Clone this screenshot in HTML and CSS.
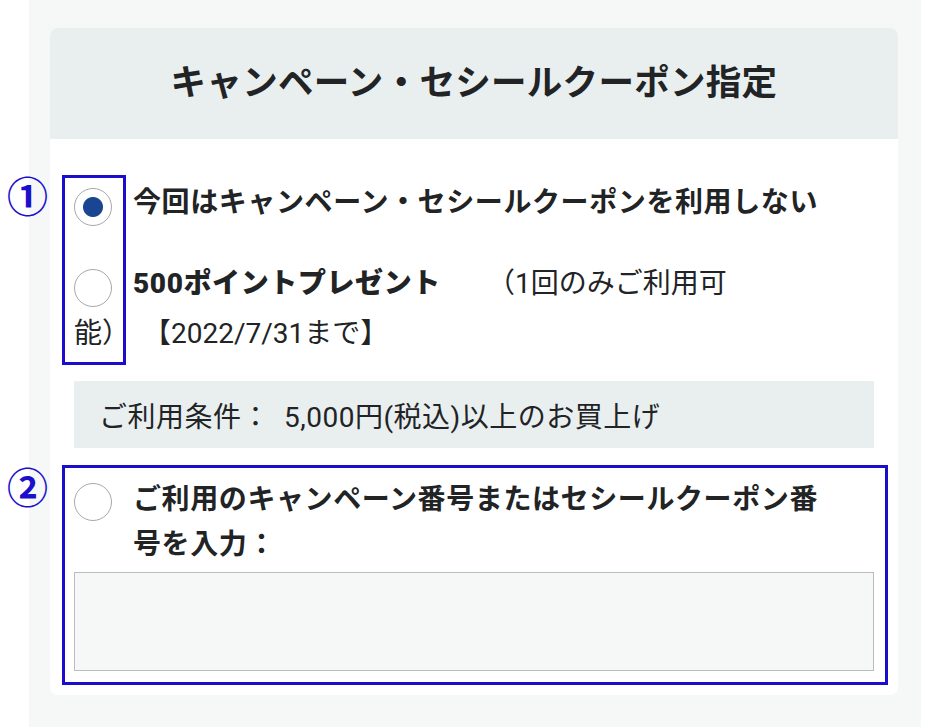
FILE: index.html
```html
<!DOCTYPE html>
<html lang="ja">
<head>
    <meta charset="UTF-8">
    <title>キャンペーン・セシールクーポン指定</title>
    <link rel="stylesheet" href="styles.css">
</head>
<body>

<div class="page">
    <div class="card">
        <h1 class="card-title">キャンペーン・セシールクーポン指定</h1>

        <div class="card-body">
            <span class="mark mark-one">①</span>
            <span class="frame frame-one"></span>
            <span class="mark mark-two">②</span>
            <span class="frame frame-two"></span>

            <label class="choice">
                <input type="radio" name="coupon" class="radio" checked>
                <span class="choice-text">今回はキャンペーン・セシールクーポンを利用しない</span>
            </label>

            <label class="choice choice-flow">
                <input type="radio" name="coupon" class="radio">
                <b>500ポイントプレゼント</b><span class="note">（1回のみご利用可<br>能）</span><span class="limit">【2022/7/31まで】</span>
            </label>

            <div class="condition">ご利用条件：<span class="condition-value">5,000円(税込)以上のお買上げ</span></div>

            <label class="choice choice-code">
                <input type="radio" name="coupon" class="radio">
                <span class="choice-text">ご利用のキャンペーン番号またはセシールクーポン番号を入力：</span>
            </label>
            <textarea class="code-input"></textarea>
        </div>
    </div>
</div>

</body>
</html>
```

FILE: styles.css
```css
body {
    margin: 0;
    padding: 0;
    background-color: #ffffff;
    color: #212325;
    font-family: Roboto, "Noto Sans CJK JP", sans-serif;
}

.page {
    margin-left: 29px;
    width: 892px;
    min-height: 727px;
    box-sizing: border-box;
    padding: 28px 23px 32px 21px;
    background-color: #f6f8f8;
}

.card {
    background: #fff;
    border-radius: 8px;
}

.card-title {
    margin: 0;
    height: 111px;
    line-height: 111px;
    text-align: center;
    font-size: 35.5px;
    letter-spacing: 0.3px;
    font-weight: bold;
    background-color: #e9eeef;
    border-radius: 8px 8px 0 0;
}

.card-body {
    position: relative;
    padding: 49px 24px 24px;
}

/* annotation marks drawn over the form */
.mark {
    position: absolute;
    left: -43px;
    font-size: 41px;
    line-height: 40px;
    font-weight: bold;
    color: #1c0fcb;
    font-family: "Noto Sans CJK JP", sans-serif;
}

.mark-one {
    top: 35px;
}

.mark-two {
    top: 326px;
}

.frame {
    position: absolute;
    left: 12px;
    border: 3px solid #1a0dcc;
    box-sizing: border-box;
}

.frame-one {
    top: 36px;
    width: 64px;
    height: 190px;
}

.frame-two {
    top: 326px;
    width: 826px;
    height: 220px;
}

.radio {
    appearance: none;
    -webkit-appearance: none;
    width: 38px;
    height: 38px;
    margin: 0;
    border: 1px solid #a8a8a8;
    border-radius: 50%;
    background: #fff;
    flex-shrink: 0;
}

.radio:checked {
    background: radial-gradient(circle, #1a4592 0 9.5px, #fff 10.5px);
}

.choice {
    display: flex;
    align-items: flex-start;
    gap: 21px;
    font-size: 28px;
    letter-spacing: 0.6px;
    font-weight: bold;
}

.choice-text {
    line-height: 30px;
}

.choice-flow {
    display: block;
    margin-top: 33px;
    line-height: 50px;
}

.choice-flow .radio {
    float: left;
    margin: 10px 21px 0 0;
}

.note {
    font-weight: normal;
    letter-spacing: 0;
    margin-left: 46px;
}

.limit {
    font-weight: normal;
    letter-spacing: 0;
    margin-left: 27px;
}

.condition {
    margin-top: 22px;
    height: 67px;
    display: flex;
    align-items: center;
    padding-left: 25px;
    font-size: 28px;
    letter-spacing: 0.5px;
    background-color: #e9eeef;
}

.condition-value {
    margin-left: 14px;
}

.choice-code {
    margin-top: 29px;
}

.choice-code .radio {
    margin-top: 6px;
}

.choice-code .choice-text {
    line-height: 45px;
    max-width: 700px;
}

.code-input {
    display: block;
    width: 100%;
    height: 99px;
    margin-top: 5px;
    box-sizing: border-box;
    border: 1px solid #b9bcc0;
    background-color: #f6f8f8;
    resize: none;
}
```
